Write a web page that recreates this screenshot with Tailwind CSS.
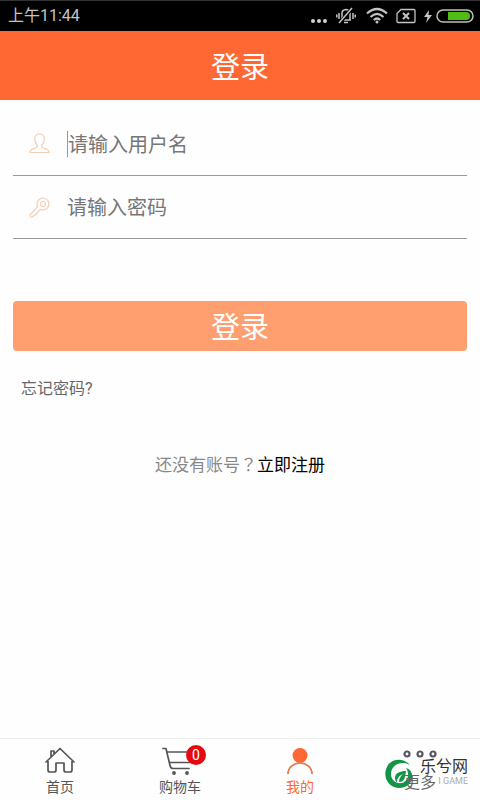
<!DOCTYPE html>
<html lang="zh-CN">
<head>
<meta charset="utf-8">
<meta name="viewport" content="width=device-width, initial-scale=1">
<title>登录</title>
<script src="https://cdn.jsdelivr.net/npm/@tailwindcss/browser@4"></script>
</head>
<body class="min-h-screen flex flex-col bg-[#fefefe] font-[Roboto,'Noto_Sans_CJK_SC',sans-serif]">
  <div class="h-[31px] shrink-0 flex items-center justify-between bg-black border-t border-[#333] pl-2 pr-1.5 text-[#c4c4c4]">
    <span class="text-base leading-6">上午11:44</span>
    <div class="flex items-center" aria-hidden="true">
      <svg class="w-[18px] h-5 mr-2" viewBox="0 0 18 20" fill="#d0d0d0"><circle cx="3" cy="15" r="2"/><circle cx="9" cy="15" r="2"/><circle cx="15" cy="15" r="2"/></svg>
      <svg class="w-5 h-5 mr-2.5" viewBox="0 0 20 20" fill="none" stroke="#c4c4c4" stroke-width="1.5"><path d="M5 14h10M6 14V7q0-3 4-3.500q4 .5 4 3.500v7M8 16.500h4M3 7v6M17 7v6M.8 8.500v3M19.200 8.500v3"/><path d="M3 18L16 2" stroke="#000" stroke-width="3.500"/><path d="M3 17L16 2"/></svg>
      <svg class="w-[22px] h-5 mr-2" viewBox="0 0 22 20" fill="none" stroke="#c4c4c4" stroke-width="2.200"><path d="M1 7.500Q11-1.500 21 7.500M4.500 11Q11 4.500 17.500 11M7.800 14Q11 11 14.200 14"/><circle cx="11" cy="16" r="1.500" fill="#c4c4c4" stroke="none"/></svg>
      <svg class="w-5 h-5 mr-2" viewBox="0 0 20 20" fill="none" stroke="#c4c4c4" stroke-width="1.300"><path d="M5 3.500h13q1 0 1 1v11q0 1-1 1H2q-1 0-1-1v-8z"/><path d="M7 7l6 6M13 7l-6 6" stroke-width="2"/></svg>
      <svg class="w-2 h-5 mr-1" viewBox="0 0 8 20" fill="#c4c4c4"><path d="M5 4L0 11h3.500L2 17l6-8H4.500z"/></svg>
      <svg class="w-[38px] h-5" viewBox="0 0 38 20"><rect x="1" y="4" width="36" height="12" rx="6" fill="none" stroke="#b8c4b0" stroke-width="1.500"/><path d="M12 6h18a4 4 0 010 8H12z" fill="#4fbd14"/></svg>
    </div>
  </div>
  <header class="h-[69px] shrink-0 flex items-center justify-center bg-[#ff6833] pt-1">
    <h1 class="text-[29px] leading-10 text-white">登录</h1>
  </header>

  <main class="grow px-[13px] pt-3">
    <form>
      <label class="h-16 flex items-center border-b border-[#999] pl-4">
        <svg class="w-[21px] h-[21px] mr-[17px]" viewBox="0 0 21 21" fill="none" stroke="#f6cdb5" stroke-width="1.200" aria-hidden="true"><path d="M10.500 1C7.500 1 5.500 2.800 5.700 6c0 3 1 5 2.600 6.500v1.800C6 15.800 1 15.500 1 19.500h19c0-4-5-3.700-7.300-5.200v-1.800C14.300 11 15.300 9 15.300 6c.2-3.200-1.800-5-4.800-5z"/></svg>
        <span class="w-px h-[26px] bg-[#999]"></span>
        <input type="text" aria-label="用户名" placeholder="请输入用户名" class="grow min-w-0 h-10 pt-0.5 text-xl text-[#777] placeholder:text-[#777] outline-none">
      </label>
      <label class="h-[63px] flex items-center border-b border-[#999] pl-4">
        <svg class="w-[21px] h-[21px] mr-[17px]" viewBox="0 0 21 21" fill="none" stroke="#f6cdb5" stroke-width="1.200" aria-hidden="true"><circle cx="14" cy="7" r="2.500"/><path d="M14 1a6 6 0 11-2.500 11.500L10 14l-1 .3-.3 1.500-1.500.3-.3 1.500-1.600.4L3.500 20Q1 20.500 1 18l7.600-8.500A6 6 0 0114 1z"/></svg>
        <input type="password" aria-label="密码" placeholder="请输入密码" class="grow min-w-0 h-10 pt-0.5 text-xl text-[#777] placeholder:text-[#777] outline-none">
      </label>
      <button type="button" class="mt-[62px] w-full h-[50px] pt-1 rounded bg-[#ff9e6f] text-[29px] leading-10 text-white">登录</button>
    </form>
    <div class="mt-[26px] pl-2"><a href="#" class="text-base leading-6 text-[#666]">忘记密码?</a></div>
    <p class="mt-[51px] text-center text-[17px] leading-6 text-[#888]">还没有账号<span lang="zh-TW" class="font-['Noto_Sans_CJK_TC',sans-serif]">？</span><a href="#" class="text-black">立即注册</a></p>
  </main>

  <nav class="relative h-[62px] shrink-0 grid grid-cols-4 border-t border-[#eee] text-sm leading-5 text-[#555]">
    <a href="#" class="flex flex-col items-center pt-2">
      <svg class="w-[30px] h-[30px]" viewBox="0 0 30 30" fill="none" stroke="#555" stroke-width="1.700" stroke-linejoin="round" stroke-linecap="round" aria-hidden="true"><path d="M1 15L15 1.500 29 15M6 9.500V4h3v3M3 14v9q0 2 2 2h4q2 0 2-2v-7h8v7q0 2 2 2h4q2 0 2-2v-9"/></svg>
      <span>首页</span>
    </a>
    <a href="#" class="flex flex-col items-center pt-2">
      <span class="relative">
        <svg class="w-9 h-[30px]" viewBox="0 0 36 30" fill="none" stroke="#555" stroke-width="1.700" stroke-linecap="round" stroke-linejoin="round" aria-hidden="true"><path d="M1 1.500h3l4 17q.6 3 3 3h16M5.500 5h23M8 15.500h20"/><circle cx="12" cy="26" r="1.900" fill="#555" stroke="none"/><circle cx="25" cy="26" r="1.900" fill="#555" stroke="none"/></svg>
        <span class="absolute left-6 -top-0.5 size-5 rounded-full bg-[#e60a10] text-center text-sm leading-5 text-white">0</span>
      </span>
      <span>购物车</span>
    </a>
    <a href="#" class="flex flex-col items-center pt-2 text-[#ff6833]">
      <svg class="w-[30px] h-[30px]" viewBox="0 0 30 30" aria-hidden="true"><circle cx="15" cy="8.500" r="7.500" fill="#ff6833"/><path d="M3 27a12 11 0 0124 0" fill="none" stroke="#e27850" stroke-width="1.700"/></svg>
      <span>我的</span>
    </a>
    <a href="#" class="flex flex-col items-center pt-2 text-base leading-5">
      <svg class="w-9 h-[26px]" viewBox="0 0 36 26" fill="none" stroke="#555860" stroke-width="2.200" aria-hidden="true"><circle cx="5" cy="7" r="2.500"/><circle cx="18" cy="7" r="2.500"/><circle cx="31" cy="7" r="2.500"/></svg>
      <span class="relative z-10 text-[#666]">更多</span>
    </a>
    <div class="absolute right-3 top-5 flex items-start gap-1.5">
      <svg class="w-[30px] h-[30px]" viewBox="0 0 30 30" aria-hidden="true"><path d="M26 6C20-1 9-1 4 6c-5 8-3 18 6 22 8 3 17-1 18-9 1-5-2-9-6-10 4 6 2 13-4 15-6 1-11-3-11-9C7 6 17 1 26 6z" fill="#149447"/><path d="M22 12c-6 0-11 2-11 7 0 2 1 4 2 4 0-4 2-6 6-8-3 3-4 5-4 8 6 0 6-5 7-11z" fill="#149447"/></svg>
      <div class="flex flex-col items-end">
        <span class="text-base leading-4 text-[#333]">乐兮网</span>
        <span class="text-[9px] leading-3 text-[#aaa]">I GAME</span>
      </div>
    </div>
  </nav>
</body>
</html>
